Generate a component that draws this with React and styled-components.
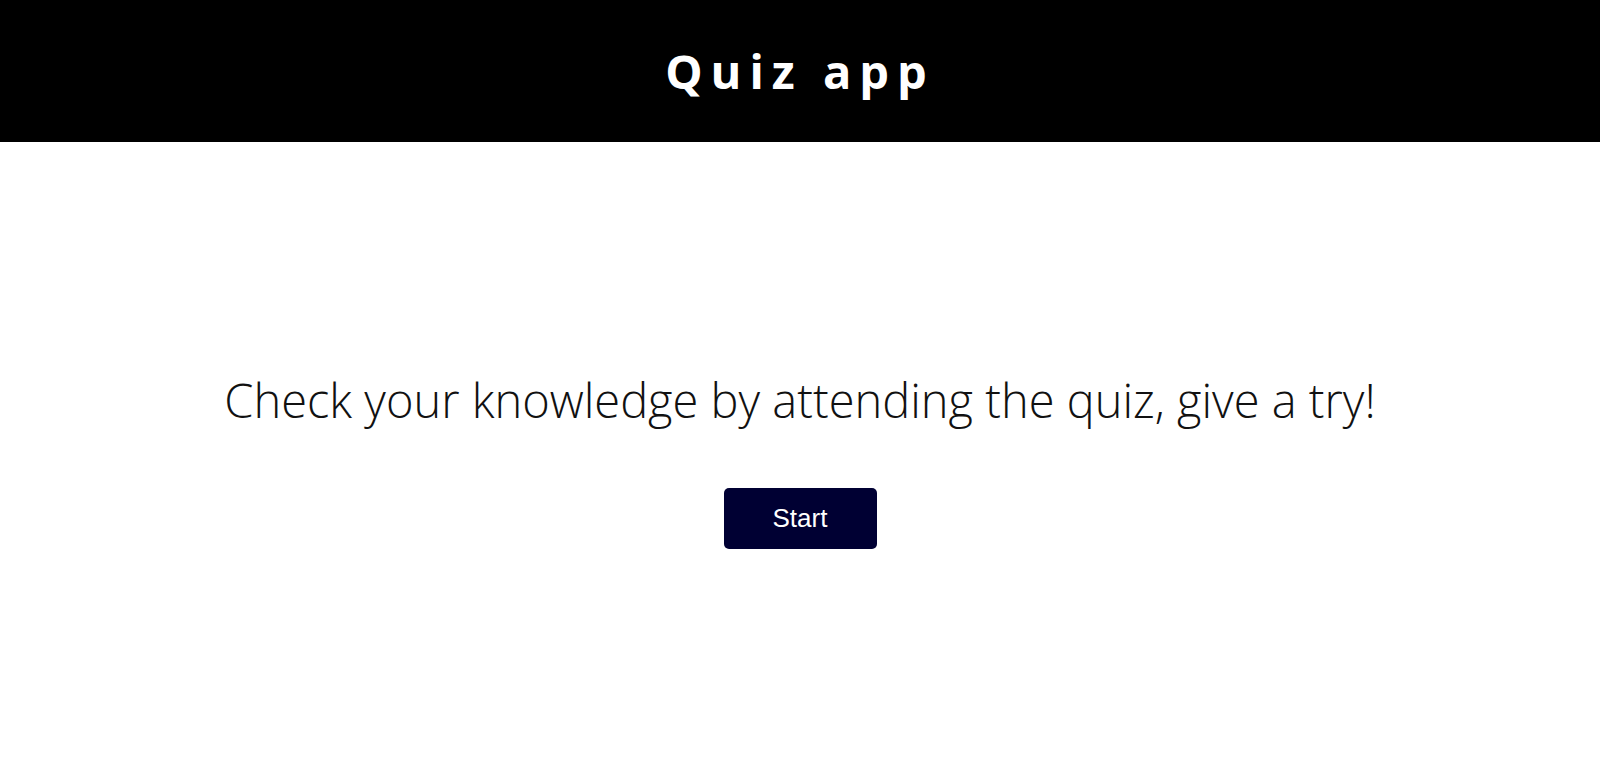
import styled, { createGlobalStyle } from "styled-components";

const GlobalStyle = createGlobalStyle`
  body {
    margin: 0;
    background: #fff;
    font-family: "Open Sans", "Noto Sans", sans-serif;
  }
`;

const Page = styled.div`
  min-height: 100vh;
  display: flex;
  flex-direction: column;
`;

const Header = styled.header`
  background-color: #000;
  color: #fff;
  height: 142px;
  display: flex;
  align-items: center;
  justify-content: center;
`;

const Title = styled.h1`
  margin: 0;
  font-size: 47px;
  font-weight: 700;
  letter-spacing: 0.17em;
`;

const Main = styled.main`
  display: flex;
  flex-direction: column;
  align-items: center;
  padding-top: 218px;
`;

const Tagline = styled.p`
  margin: 0;
  font-size: 47px;
  font-weight: 300;
  color: #111;
  line-height: 80px;
`;

const StartButton = styled.button`
  margin-top: 48px;
  width: 153px;
  height: 61px;
  background-color: #000033;
  color: #fff;
  border: none;
  border-radius: 5px;
  font-family: "Liberation Sans", Arial, sans-serif;
  font-size: 26px;
  cursor: pointer;
`;

const App = () => {
  return (
    <Page>
      <GlobalStyle />
      <Header>
        <Title>Quiz app</Title>
      </Header>
      <Main>
        <Tagline>Check your knowledge by attending the quiz, give a try!</Tagline>
        <StartButton>Start</StartButton>
      </Main>
    </Page>
  );
};

export default App;
